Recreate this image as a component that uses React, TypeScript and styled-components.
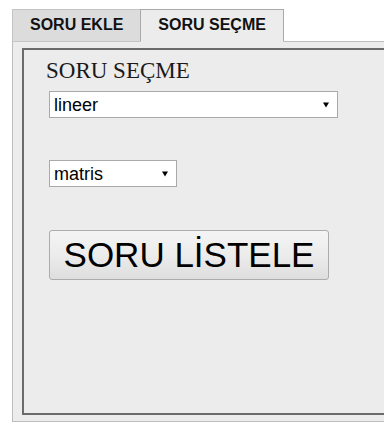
import styled, { createGlobalStyle } from "styled-components";

const GlobalStyle = createGlobalStyle`
  html, body {
    margin: 0;
    padding: 0;
    background: #ffffff;
    overflow: hidden;
  }
  body {
    font-family: "Liberation Sans", Arial, sans-serif;
  }
`;

const Page = styled.div`
  padding: 9px 0 0 12px;
`;

const TabBar = styled.div`
  display: flex;
  align-items: flex-end;
  position: relative;
  z-index: 1;
  margin-bottom: -1px;
`;

const Tab = styled.div<{ $active?: boolean }>`
  box-sizing: border-box;
  height: 33px;
  padding: 6px 17px 0 17px;
  font: bold 16px/18px "Liberation Sans", Arial, sans-serif;
  color: #111;
  background: ${(p) => (p.$active ? "#ececec" : "#dcdcdc")};
  border: 1px solid ${(p) => (p.$active ? "#a9a9a9" : "#c4c4c4")};
  border-bottom-color: ${(p) => (p.$active ? "#ececec" : "#c4c4c4")};
  ${(p) => (p.$active ? "" : "border-right-color: #a9a9a9; margin-right: -1px;")}
`;

/* panel keeps running past the right edge in the shot, so no right border */
const Panel = styled.div`
  box-sizing: border-box;
  background: #ececec;
  border: 1px solid #bdbdbd;
  border-right: none;
  padding: 6px 0 6px 9px;
`;

const Frame = styled.div`
  box-sizing: border-box;
  height: 367px;
  border: 2px solid #6b6b6b;
  border-right: none;
  background: #ececec;
  padding: 8px 0 0 25px;
  display: flex;
  flex-direction: column;
  align-items: flex-start;
`;

const Heading = styled.div`
  font: 23px/25px "Liberation Serif", "Times New Roman", serif;
  color: #1a1a1a;
  margin-left: -3px;
`;

const SelectWrap = styled.div<{ $width: number; $gap: number }>`
  position: relative;
  width: ${(p) => p.$width}px;
  margin-top: ${(p) => p.$gap}px;
`;

const Select = styled.select`
  box-sizing: border-box;
  appearance: none;
  -webkit-appearance: none;
  width: 100%;
  height: 27px;
  margin: 0;
  padding: 0 20px 0 4px;
  border: 1px solid #a9a9a9;
  border-radius: 0;
  background: #ffffff;
  font: 18px "Liberation Sans", Arial, sans-serif;
  color: #000;
  outline: none;
`;

const Arrow = styled.svg`
  position: absolute;
  right: 9px;
  top: 11px;
  pointer-events: none;
`;

const ListButton = styled.button`
  box-sizing: border-box;
  margin-top: 43px;
  width: 280px;
  height: 50px;
  padding: 0;
  border: 1px solid #acacac;
  border-radius: 3px;
  background: linear-gradient(#f4f4f4, #ececec 50%, #dedede);
  font: 35px "Liberation Sans", Arial, sans-serif;
  color: #000;
  cursor: pointer;
`;

function DropDown({ value, width, gap }: { value: string; width: number; gap: number }) {
  return (
    <SelectWrap $width={width} $gap={gap}>
      <Select defaultValue={value}>
        <option value={value}>{value}</option>
      </Select>
      <Arrow width="6" height="6" viewBox="0 0 6 6">
        <path d="M0 0.5 H6 L3 5.5 Z" fill="#000" />
      </Arrow>
    </SelectWrap>
  );
}

export default function App() {
  return (
    <>
      <GlobalStyle />
      <Page>
        <TabBar>
          <Tab>SORU EKLE</Tab>
          <Tab $active>SORU SEÇME</Tab>
        </TabBar>
        <Panel>
          <Frame>
            <Heading>SORU SEÇME</Heading>
            <DropDown value="lineer" width={289} gap={8} />
            <DropDown value="matris" width={128} gap={42} />
            <ListButton>SORU LİSTELE</ListButton>
          </Frame>
        </Panel>
      </Page>
    </>
  );
}
